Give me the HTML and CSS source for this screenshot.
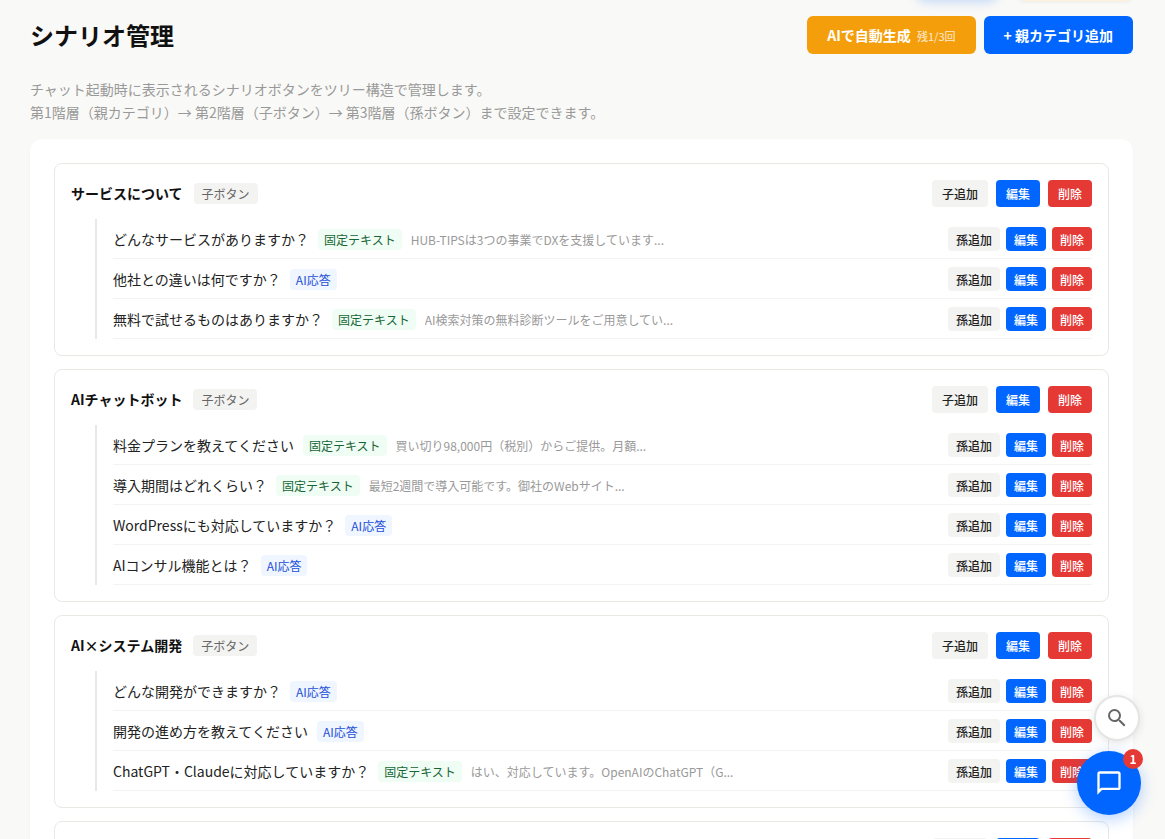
FILE: index.html
```html
<!DOCTYPE html>
<html lang="ja">
<head>
  <meta charset="UTF-8">
  <meta name="viewport" content="width=device-width, initial-scale=1.0">
  <title>シナリオ管理</title>
  <link rel="stylesheet" href="styles.css">
</head>
<body>
  <main class="page">
    <div class="prev-actions" aria-hidden="true">
      <span class="prev-primary"></span>
      <span class="prev-notice"></span>
    </div>

    <header class="page-header">
      <h1>シナリオ管理</h1>
      <div class="header-actions">
        <button class="btn btn-ai" type="button">AIで自動生成 <small>残1/3回</small></button>
        <button class="btn btn-primary" type="button">+ 親カテゴリ追加</button>
      </div>
    </header>

    <p class="description">チャット起動時に表示されるシナリオボタンをツリー構造で管理します。<br>第1階層（親カテゴリ）→ 第2階層（子ボタン）→ 第3階層（孫ボタン）まで設定できます。</p>

    <div class="panel">
      <section class="category">
        <div class="category-head">
          <h2>サービスについて</h2>
          <span class="tag tag-child">子ボタン</span>
          <div class="actions">
            <button class="btn-sub" type="button">子追加</button>
            <button class="btn-edit" type="button">編集</button>
            <button class="btn-delete" type="button">削除</button>
          </div>
        </div>
        <ul class="children">
          <li>
            <span class="label">どんなサービスがありますか？</span>
            <span class="tag tag-fixed">固定テキスト</span>
            <span class="preview">HUB-TIPSは3つの事業でDXを支援しています...</span>
            <div class="actions">
              <button class="btn-sub" type="button">孫追加</button>
              <button class="btn-edit" type="button">編集</button>
              <button class="btn-delete" type="button">削除</button>
            </div>
          </li>
          <li>
            <span class="label">他社との違いは何ですか？</span>
            <span class="tag tag-ai">AI応答</span>
            <div class="actions">
              <button class="btn-sub" type="button">孫追加</button>
              <button class="btn-edit" type="button">編集</button>
              <button class="btn-delete" type="button">削除</button>
            </div>
          </li>
          <li>
            <span class="label">無料で試せるものはありますか？</span>
            <span class="tag tag-fixed">固定テキスト</span>
            <span class="preview">AI検索対策の無料診断ツールをご用意してい...</span>
            <div class="actions">
              <button class="btn-sub" type="button">孫追加</button>
              <button class="btn-edit" type="button">編集</button>
              <button class="btn-delete" type="button">削除</button>
            </div>
          </li>
        </ul>
      </section>

      <section class="category">
        <div class="category-head">
          <h2>AIチャットボット</h2>
          <span class="tag tag-child">子ボタン</span>
          <div class="actions">
            <button class="btn-sub" type="button">子追加</button>
            <button class="btn-edit" type="button">編集</button>
            <button class="btn-delete" type="button">削除</button>
          </div>
        </div>
        <ul class="children">
          <li>
            <span class="label">料金プランを教えてください</span>
            <span class="tag tag-fixed">固定テキスト</span>
            <span class="preview">買い切り98,000円（税別）からご提供。月額...</span>
            <div class="actions">
              <button class="btn-sub" type="button">孫追加</button>
              <button class="btn-edit" type="button">編集</button>
              <button class="btn-delete" type="button">削除</button>
            </div>
          </li>
          <li>
            <span class="label">導入期間はどれくらい？</span>
            <span class="tag tag-fixed">固定テキスト</span>
            <span class="preview">最短2週間で導入可能です。御社のWebサイト...</span>
            <div class="actions">
              <button class="btn-sub" type="button">孫追加</button>
              <button class="btn-edit" type="button">編集</button>
              <button class="btn-delete" type="button">削除</button>
            </div>
          </li>
          <li>
            <span class="label">WordPressにも対応していますか？</span>
            <span class="tag tag-ai">AI応答</span>
            <div class="actions">
              <button class="btn-sub" type="button">孫追加</button>
              <button class="btn-edit" type="button">編集</button>
              <button class="btn-delete" type="button">削除</button>
            </div>
          </li>
          <li>
            <span class="label">AIコンサル機能とは？</span>
            <span class="tag tag-ai">AI応答</span>
            <div class="actions">
              <button class="btn-sub" type="button">孫追加</button>
              <button class="btn-edit" type="button">編集</button>
              <button class="btn-delete" type="button">削除</button>
            </div>
          </li>
        </ul>
      </section>

      <section class="category">
        <div class="category-head">
          <h2>AI×システム開発</h2>
          <span class="tag tag-child">子ボタン</span>
          <div class="actions">
            <button class="btn-sub" type="button">子追加</button>
            <button class="btn-edit" type="button">編集</button>
            <button class="btn-delete" type="button">削除</button>
          </div>
        </div>
        <ul class="children">
          <li>
            <span class="label">どんな開発ができますか？</span>
            <span class="tag tag-ai">AI応答</span>
            <div class="actions">
              <button class="btn-sub" type="button">孫追加</button>
              <button class="btn-edit" type="button">編集</button>
              <button class="btn-delete" type="button">削除</button>
            </div>
          </li>
          <li>
            <span class="label">開発の進め方を教えてください</span>
            <span class="tag tag-ai">AI応答</span>
            <div class="actions">
              <button class="btn-sub" type="button">孫追加</button>
              <button class="btn-edit" type="button">編集</button>
              <button class="btn-delete" type="button">削除</button>
            </div>
          </li>
          <li>
            <span class="label">ChatGPT・Claudeに対応していますか？</span>
            <span class="tag tag-fixed">固定テキスト</span>
            <span class="preview">はい、対応しています。OpenAIのChatGPT（G...</span>
            <div class="actions">
              <button class="btn-sub" type="button">孫追加</button>
              <button class="btn-edit" type="button">編集</button>
              <button class="btn-delete" type="button">削除</button>
            </div>
          </li>
        </ul>
      </section>

      <section class="category">
        <div class="category-head">
          <div class="actions actions-empty">
            <button class="btn-sub" type="button" aria-label="子追加"></button>
            <button class="btn-edit" type="button" aria-label="編集"></button>
            <button class="btn-delete" type="button" aria-label="削除"></button>
          </div>
        </div>
      </section>
    </div>
  </main>

  <button class="fab-search" type="button" aria-label="検索">
    <svg width="24" height="24" viewBox="0 0 24 24" fill="#666"><path d="M15.5 14h-.79l-.28-.27A6.47 6.47 0 0 0 16 9.5 6.5 6.5 0 1 0 9.5 16c1.61 0 3.09-.59 4.23-1.57l.27.28v.79l5 4.99L20.49 19l-4.99-5zm-6 0C7.01 14 5 11.99 5 9.5S7.01 5 9.5 5 14 7.01 14 9.5 11.99 14 9.5 14z"/></svg>
  </button>
  <button class="fab-chat" type="button" aria-label="チャット">
    <svg width="28" height="28" viewBox="0 0 24 24" fill="#fff"><path d="M20 2H4c-1.1 0-2 .9-2 2v18l4-4h14c1.1 0 2-.9 2-2V4c0-1.1-.9-2-2-2zm0 14H5.2L4 17.2V4h16v12z"/></svg>
    <span class="fab-badge">1</span>
  </button>
</body>
</html>
```
FILE: styles.css
```css
* {
  box-sizing: border-box;
}

body {
  margin: 0;
  height: 100vh;
  overflow: hidden;
  background-color: #f9f9f7;
  color: #111;
  font-family: "Noto Sans CJK JP", "Noto Sans", sans-serif;
  font-size: 14px;
}

button {
  border: none;
  font-family: inherit;
  cursor: pointer;
}

.page {
  height: 100vh;
  padding: 0 32px 0 30px;
  overflow: hidden;
}

/* bottom edge of the section above */
.prev-actions {
  display: flex;
  justify-content: flex-end;
  align-items: flex-end;
  gap: 20px;
  height: 1px;
}

.prev-primary {
  width: 80px;
  height: 36px;
  margin-bottom: 4px;
  border-radius: 8px;
  background-color: #0066ff;
  box-shadow: 0 4px 12px rgba(0, 102, 255, 0.25);
}

.prev-notice {
  width: 116px;
  height: 36px;
  border-radius: 8px;
  background-color: #fef3d6;
  box-shadow: 0 1px 4px rgba(0, 0, 0, 0.06);
}

.page-header {
  display: flex;
  justify-content: space-between;
  align-items: center;
  margin-top: 15px;
}

h1 {
  margin: 0;
  font-size: 24px;
  line-height: 38px;
  font-weight: 700;
}

.header-actions {
  display: flex;
  gap: 8px;
}

.btn {
  height: 38px;
  padding: 0 20px;
  border-radius: 6px;
  color: #fff;
  font-size: 14px;
  font-weight: 700;
}

.btn-ai {
  background-color: #f59e0b;
}

.btn-ai small {
  margin-left: 3px;
  font-size: 11px;
  font-weight: 400;
  opacity: 0.8;
}

.btn-primary {
  background-color: #0066ff;
}

.description {
  margin: 24px 0 15px;
  color: #999;
  line-height: 23px;
}

.panel {
  display: flex;
  flex-direction: column;
  gap: 13px;
  padding: 24px;
  background-color: #fff;
  border-radius: 12px;
  box-shadow: 0 1px 3px rgba(0, 0, 0, 0.04);
}

.category {
  padding: 16px;
  border: 1px solid #e9e9e4;
  border-radius: 8px;
}

.category-head {
  display: flex;
  align-items: center;
  gap: 11px;
}

h2 {
  margin: 0;
  font-size: 14px;
  line-height: 27px;
  font-weight: 700;
}

.tag {
  border-radius: 4px;
  font-size: 12px;
  line-height: 21px;
  white-space: nowrap;
}

.tag-child {
  padding: 0 8px;
  background-color: #f3f3f1;
  color: #666;
}

.tag-fixed {
  padding: 0 6px;
  background-color: #f0fdf4;
  color: #166534;
}

.tag-ai {
  padding: 0 6px;
  background-color: #eff6ff;
  color: #1d4ed8;
}

.actions {
  display: flex;
  gap: 8px;
  margin-left: auto;
}

.actions button {
  height: 27px;
  padding: 0 10px;
  border-radius: 4px;
  font-size: 12px;
  font-weight: 500;
  white-space: nowrap;
}

.actions .btn-sub {
  background-color: #f3f3f1;
  color: #222;
}

.actions .btn-edit {
  background-color: #0066ff;
  color: #fff;
}

.actions .btn-delete {
  background-color: #e53935;
  color: #fff;
}

.actions-empty button {
  width: 44px;
}

.actions-empty .btn-sub {
  width: 56px;
}

.children {
  margin: 12px 0 0 24px;
  padding: 0 0 0 16px;
  border-left: 2px solid #e8e8e4;
  list-style: none;
}

.children li {
  display: flex;
  align-items: center;
  gap: 9px;
  padding: 8px 0 7px;
  border-bottom: 1px solid #f3f3f1;
}

.children .actions {
  gap: 6px;
}

.children .actions button {
  height: 24px;
  padding: 0 8px;
}

.label {
  line-height: 24px;
  color: #222;
  white-space: nowrap;
}

.preview {
  overflow: hidden;
  color: #999;
  font-size: 12px;
  line-height: 21px;
  text-overflow: ellipsis;
  white-space: nowrap;
}

.fab-search,
.fab-chat {
  position: fixed;
  display: flex;
  justify-content: center;
  align-items: center;
  padding: 0;
  border-radius: 50%;
}

.fab-search {
  right: 25px;
  bottom: 98px;
  width: 46px;
  height: 46px;
  border: 2px solid #e5e5e5;
  background-color: #fff;
  box-shadow: 0 2px 8px rgba(0, 0, 0, 0.1);
}

.fab-chat {
  right: 24px;
  bottom: 24px;
  width: 64px;
  height: 64px;
  background-color: #0066ff;
  box-shadow: 0 4px 16px rgba(0, 102, 255, 0.3);
}

.fab-badge {
  position: absolute;
  top: -2px;
  right: -2px;
  width: 20px;
  height: 20px;
  border-radius: 50%;
  background-color: #e53935;
  color: #fff;
  font-size: 12px;
  font-weight: 700;
  line-height: 20px;
  text-align: center;
}
```
